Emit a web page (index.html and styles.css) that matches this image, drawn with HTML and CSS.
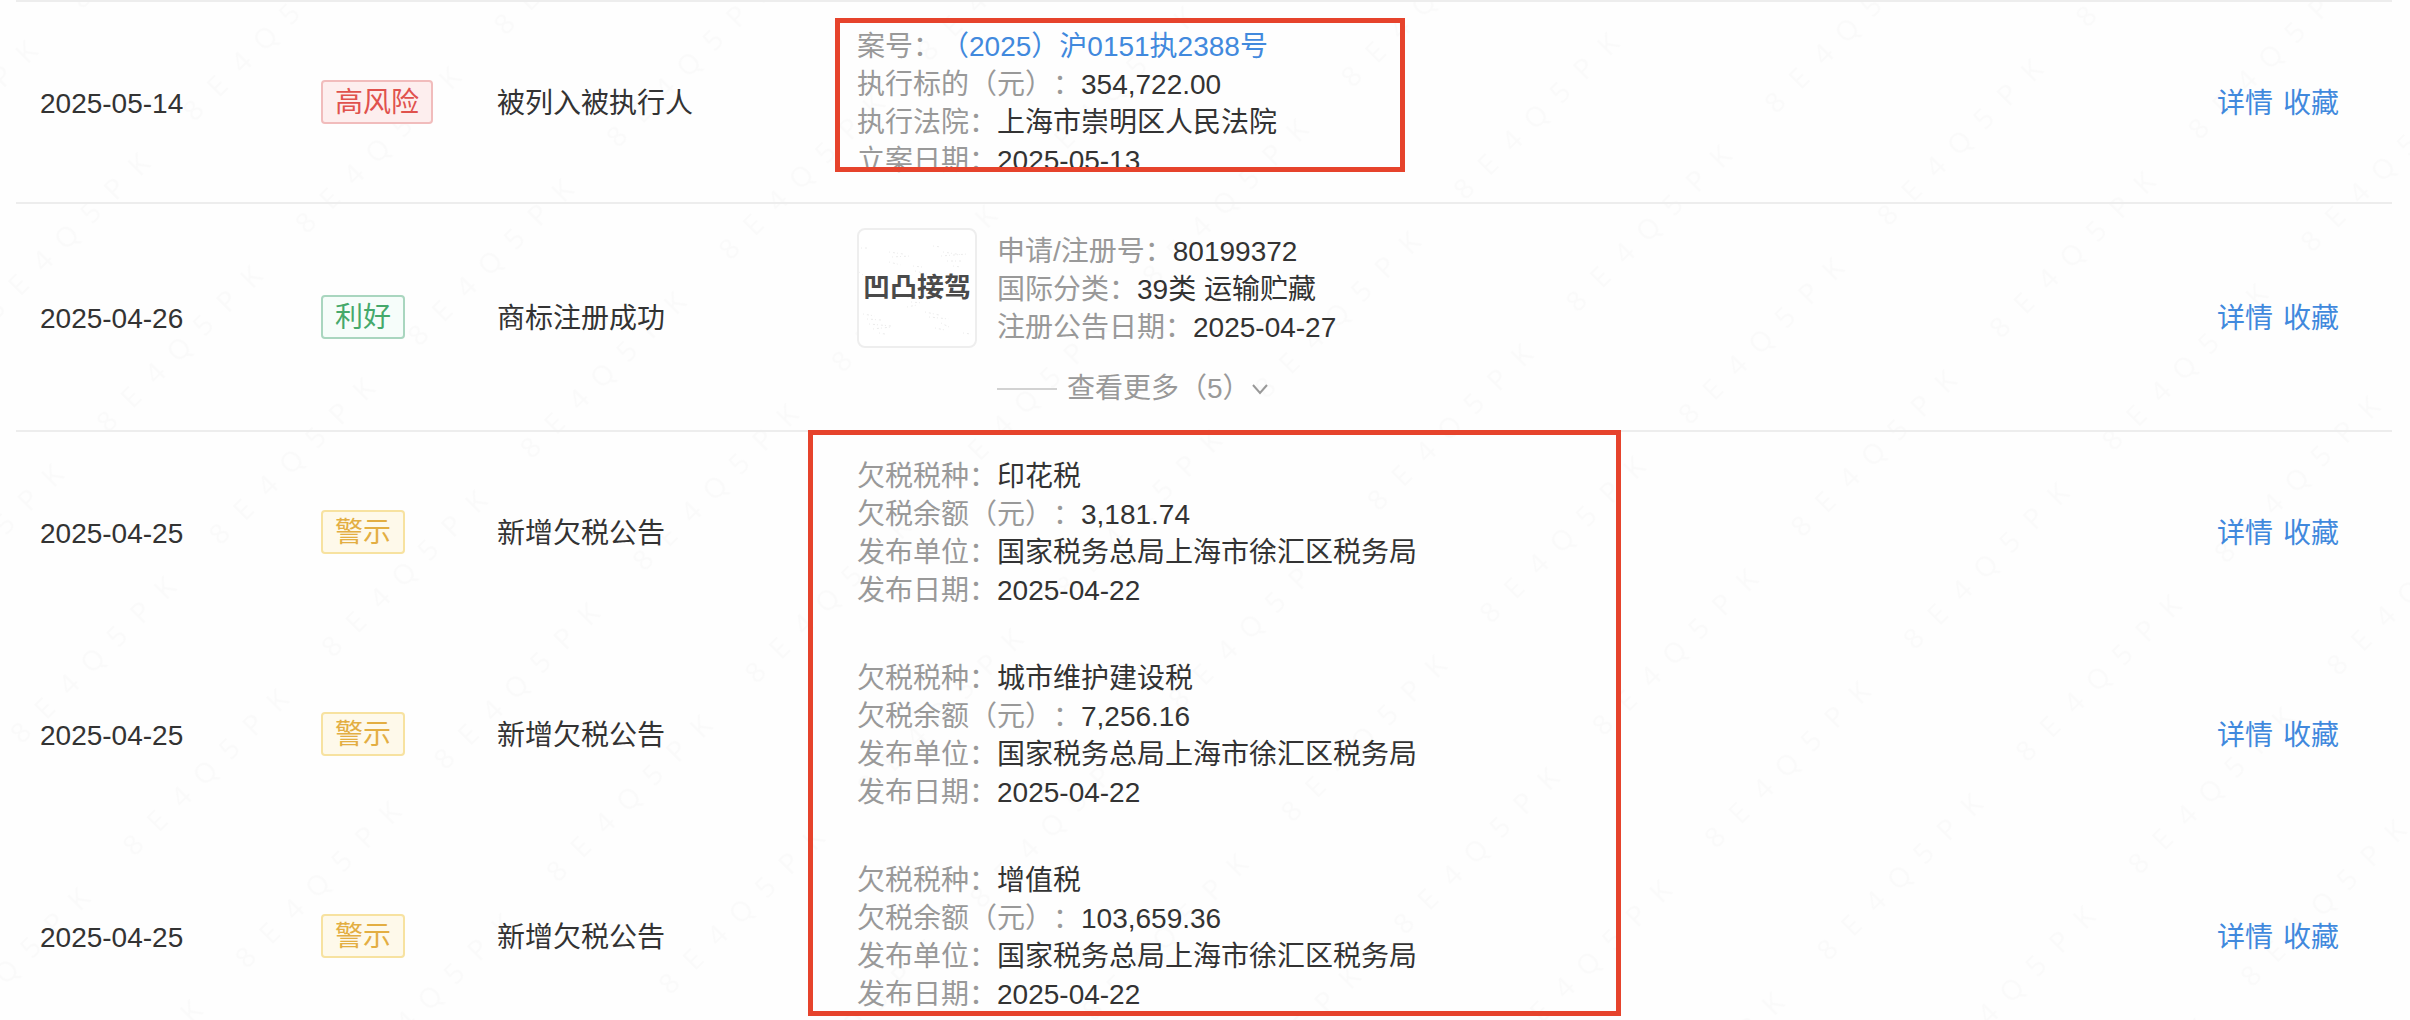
FILE: index.html
```html
<!DOCTYPE html>
<html lang="zh-CN">
<head>
  <meta charset="UTF-8">
  <meta name="viewport" content="width=device-width, initial-scale=1.0">
  <title>企业动态</title>
  <link rel="stylesheet" href="styles.css">
</head>
<body>
  <!-- Watermark -->
  <svg class="watermark" aria-hidden="true">
    <defs>
      <pattern id="mark" width="281" height="159" patternUnits="userSpaceOnUse" patternTransform="translate(244 185) rotate(-45)">
        <text class="watermark-text" x="17 51 85 119 153 187 221" y="80">8E4Q5PK</text>
      </pattern>
    </defs>
    <rect width="100%" height="100%" fill="url(#mark)"/>
  </svg>

  <!-- Event list -->
  <main class="page">
    <table class="events">
      <colgroup>
        <col class="col-date">
        <col class="col-level">
        <col class="col-event">
        <col>
        <col class="col-actions">
      </colgroup>
      <tbody>
        <tr>
          <td>2025-05-14</td>
          <td class="level"><span class="tag tag-danger">高风险</span></td>
          <td>被列入被执行人</td>
          <td class="detail">
            <p><span class="label">案号：</span><a href="#">（2025）沪0151执2388号</a></p>
            <p><span class="label">执行标的（元）：</span>354,722.00</p>
            <p><span class="label">执行法院：</span>上海市崇明区人民法院</p>
            <p><span class="label">立案日期：</span>2025-05-13</p>
            <div class="highlight highlight-case"></div>
          </td>
          <td><div class="actions"><a href="#">详情</a><a href="#">收藏</a></div></td>
        </tr>
        <tr class="group-start">
          <td>2025-04-26</td>
          <td class="level"><span class="tag tag-good">利好</span></td>
          <td>商标注册成功</td>
          <td class="detail detail-trademark">
            <div class="trademark">
              <svg class="trademark-logo" viewBox="0 0 116 116" role="img" aria-label="凹凸接驾">
                <g class="specks">
                  <path d="M30 22l14 2M33 27l18-1M30 32l12 3M84 22l20 3M82 26l26-2M88 31l14 0M94 36l8 1"/>
                  <path d="M2 18l8 0M0 42l4 3M54 36l9 1M56 41l12 3M74 16l8 1M44 66l16 3M52 72l12 1M48 77l10-2"/>
                  <path d="M4 84l12 2M8 89l14 1M10 94l22 2M14 99l18-2M20 103l6 1M66 82l14 3M70 87l20 2M82 93l8 4M76 98l10 2M104 103l8 1"/>
                </g>
                <text class="logo-text" x="58" y="67">凹凸接驾</text>
              </svg>
              <div class="trademark-info">
                <p><span class="label">申请/注册号：</span>80199372</p>
                <p><span class="label">国际分类：</span>39类 运输贮藏</p>
                <p><span class="label">注册公告日期：</span>2025-04-27</p>
              </div>
            </div>
            <button type="button" class="more">
              <span class="more-line"></span>
              <span>查看更多（5）</span>
              <svg class="chevron" viewBox="0 0 18 18" aria-hidden="true"><path d="M2 5l7 8 7-8"/></svg>
            </button>
          </td>
          <td><div class="actions"><a href="#">详情</a><a href="#">收藏</a></div></td>
        </tr>
        <tr class="group-start">
          <td>2025-04-25</td>
          <td class="level"><span class="tag tag-warn">警示</span></td>
          <td>新增欠税公告</td>
          <td class="detail">
            <p><span class="label">欠税税种：</span>印花税</p>
            <p><span class="label">欠税余额（元）：</span>3,181.74</p>
            <p><span class="label">发布单位：</span>国家税务总局上海市徐汇区税务局</p>
            <p><span class="label">发布日期：</span>2025-04-22</p>
            <div class="highlight highlight-tax"></div>
          </td>
          <td><div class="actions"><a href="#">详情</a><a href="#">收藏</a></div></td>
        </tr>
        <tr>
          <td>2025-04-25</td>
          <td class="level"><span class="tag tag-warn">警示</span></td>
          <td>新增欠税公告</td>
          <td class="detail">
            <p><span class="label">欠税税种：</span>城市维护建设税</p>
            <p><span class="label">欠税余额（元）：</span>7,256.16</p>
            <p><span class="label">发布单位：</span>国家税务总局上海市徐汇区税务局</p>
            <p><span class="label">发布日期：</span>2025-04-22</p>
          </td>
          <td><div class="actions"><a href="#">详情</a><a href="#">收藏</a></div></td>
        </tr>
        <tr>
          <td>2025-04-25</td>
          <td class="level"><span class="tag tag-warn">警示</span></td>
          <td>新增欠税公告</td>
          <td class="detail">
            <p><span class="label">欠税税种：</span>增值税</p>
            <p><span class="label">欠税余额（元）：</span>103,659.36</p>
            <p><span class="label">发布单位：</span>国家税务总局上海市徐汇区税务局</p>
            <p><span class="label">发布日期：</span>2025-04-22</p>
          </td>
          <td><div class="actions"><a href="#">详情</a><a href="#">收藏</a></div></td>
        </tr>
      </tbody>
    </table>
  </main>
</body>
</html>
```
FILE: styles.css
```css
* {
  box-sizing: border-box;
}

body {
  margin: 0;
  height: 100vh;
  overflow: hidden;
  background-color: #fefefe;
  color: #333;
  font-family: "Liberation Sans", "Noto Sans CJK SC", sans-serif;
  font-size: 28px;
  line-height: 38px;
  text-spacing-trim: space-all;
}

p {
  margin: 0;
}

a {
  color: #4189dd;
  text-decoration: none;
}

a:hover {
  text-decoration: underline;
}

.watermark {
  position: absolute;
  top: 0;
  left: 0;
  width: 100%;
  height: 100%;
  pointer-events: none;
}

.watermark-text {
  font-family: "Open Sans", sans-serif;
  font-size: 28px;
  text-anchor: middle;
  fill: #fafafa;
}

.page {
  position: relative;
  padding: 0 18px 0 16px;
}

/* Table */
.events {
  width: 100%;
  table-layout: fixed;
  border-collapse: separate;
  border-spacing: 0;
}

.col-date {
  width: 281px;
}

.col-level {
  width: 176px;
}

.col-event {
  width: 360px;
}

.col-actions {
  width: 199px;
}

.events td {
  padding: 26px 24px 22px;
  border-top: 2px solid transparent;
  vertical-align: middle;
}

.events .level {
  padding: 24px;
}

.events tr:first-child td,
.events .group-start td {
  border-top-color: #ededed;
}

.detail {
  position: relative;
}

.events .detail-trademark {
  padding-top: 24px;
}

.label {
  color: #999;
}

.actions {
  display: flex;
  gap: 10px;
  white-space: nowrap;
}

/* Tags */
.tag {
  display: inline-block;
  padding: 2px 12px 0;
  border: 2px solid;
  border-radius: 4px;
  vertical-align: middle;
}

.tag-danger {
  color: #e0524d;
  background-color: #fdeeee;
  border-color: #f1bcbc;
}

.tag-good {
  color: #45a96b;
  background-color: #f6fdfa;
  border-color: #a9d6bf;
}

.tag-warn {
  color: #e3ae42;
  background-color: #fef9ea;
  border-color: #f7e2a0;
}

/* Trademark */
.trademark {
  display: flex;
  align-items: center;
  gap: 20px;
}

.trademark-logo {
  width: 120px;
  height: 120px;
  border: 2px solid #eee;
  border-radius: 8px;
  background-color: #fff;
}

.trademark-info {
  padding-top: 4px;
}

.logo-text {
  font-size: 27px;
  font-weight: bold;
  text-anchor: middle;
  fill: #4a4a4a;
}

.specks {
  fill: none;
  stroke: #ececec;
  stroke-width: 1;
  stroke-dasharray: 1 3 2 2;
}

.more {
  display: flex;
  align-items: center;
  margin: 22px 0 0 140px;
  padding: 0;
  border: none;
  background: none;
  color: #999;
  font: inherit;
  text-spacing-trim: inherit;
  cursor: pointer;
}

.more-line {
  width: 60px;
  height: 2px;
  margin-right: 10px;
  background-color: #d2d2d2;
}

.chevron {
  width: 18px;
  height: 18px;
  fill: none;
  stroke: #999;
  stroke-width: 2;
}

/* Red marker boxes */
.highlight {
  position: absolute;
  border: 5px solid #e6432c;
  pointer-events: none;
}

.highlight-case {
  top: 16px;
  left: 2px;
  width: 570px;
  height: 154px;
}

.highlight-tax {
  top: -2px;
  left: -25px;
  width: 813px;
  height: 586px;
}
```
